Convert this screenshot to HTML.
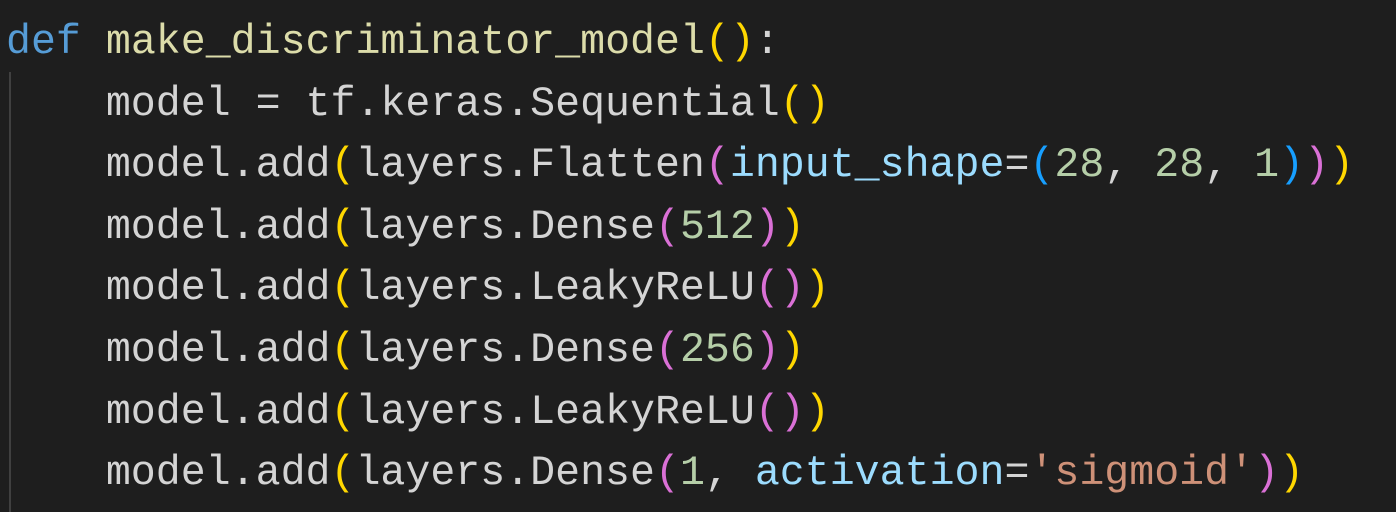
<!DOCTYPE html>
<html><head><style>
html,body{margin:0;padding:0;background:#1e1e1e;width:1396px;height:510px;overflow:hidden}
pre{margin:0;position:absolute;left:6px;top:12px;font-family:"Liberation Mono",monospace;font-size:41.6px;line-height:61.6px;color:#d4d4d4;letter-spacing:0}
.k{color:#569cd6}.f{color:#dcdcaa}.y{color:#ffd700}.p{color:#da70d6}.b{color:#179fff}.n{color:#b5cea8}.v{color:#9cdcfe}.s{color:#ce9178}
.g{position:absolute;left:9px;top:72px;width:2px;height:440px;background:#404040}
</style></head><body>
<div class="g"></div>
<pre><span class="k">def</span> <span class="f">make_discriminator_model</span><span class="y">()</span>:
    model = tf.keras.Sequential<span class="y">()</span>
    model.add<span class="y">(</span>layers.Flatten<span class="p">(</span><span class="v">input_shape</span>=<span class="b">(</span><span class="n">28</span>, <span class="n">28</span>, <span class="n">1</span><span class="b">)</span><span class="p">)</span><span class="y">)</span>
    model.add<span class="y">(</span>layers.Dense<span class="p">(</span><span class="n">512</span><span class="p">)</span><span class="y">)</span>
    model.add<span class="y">(</span>layers.LeakyReLU<span class="p">()</span><span class="y">)</span>
    model.add<span class="y">(</span>layers.Dense<span class="p">(</span><span class="n">256</span><span class="p">)</span><span class="y">)</span>
    model.add<span class="y">(</span>layers.LeakyReLU<span class="p">()</span><span class="y">)</span>
    model.add<span class="y">(</span>layers.Dense<span class="p">(</span><span class="n">1</span>, <span class="v">activation</span>=<span class="s">'sigmoid'</span><span class="p">)</span><span class="y">)</span></pre>
</body></html>
